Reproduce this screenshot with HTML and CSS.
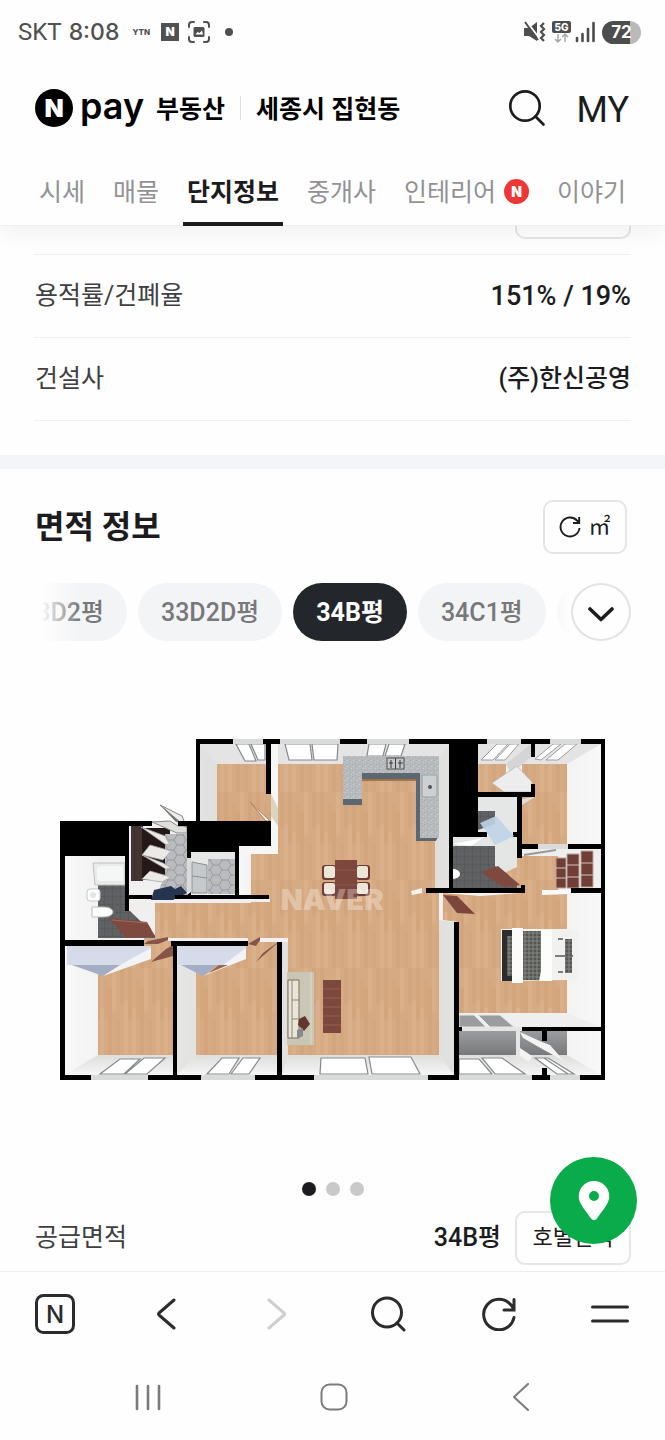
FILE: index.html
```html
<!DOCTYPE html>
<html lang="ko">
<head>
<meta charset="utf-8">
<meta name="viewport" content="width=device-width, initial-scale=1">
<title>Npay 부동산</title>
<link rel="stylesheet" href="styles.css">
</head>
<body>
<div class="app">
  <header class="top">
    <div class="status">
      <span class="carrier">SKT</span>
      <span class="clock">8:08</span>
      <span class="ytn">YTN</span>
      <span class="status-n">N</span>
      <svg class="shot" width="22" height="22" viewBox="0 0 22 22" fill="none" stroke="#505050" stroke-width="2" stroke-linecap="round">
        <path d="M1 6V4a3 3 0 0 1 3-3h2M16 1h2a3 3 0 0 1 3 3v2M21 16v2a3 3 0 0 1-3 3h-2M6 21H4a3 3 0 0 1-3-3v-2"/>
        <rect x="5.500" y="6" width="11" height="10" rx="1.500" fill="#505050" stroke="none"/>
        <path d="M7.500 13.500l2-2.500 2 1 2.500-2.500 1 4z" fill="#fff" stroke="none"/>
      </svg>
      <span class="status-dot"></span>
      <span class="status-gap"></span>
      <svg width="23" height="22" viewBox="0 0 23 22" fill="none" stroke="#4d4d4d">
        <path d="M1 7h5l8-6v19l-8-5H1z" fill="#4d4d4d" stroke="none"/>
        <path d="M3 0l14 18" stroke="#fefefe" stroke-width="2"/>
        <path d="M2 1l13 18" stroke-width="2"/>
        <path d="M21 2l-3 3 3 3-3 3 3 3-3 3 3 3" stroke-width="2.200"/>
      </svg>
      <svg class="net" width="19" height="23" viewBox="0 0 19 23">
        <rect width="19" height="12" rx="2" fill="#4d4d4d"/>
        <text x="9.500" y="10" text-anchor="middle" class="net-text">5G</text>
        <path d="M6 13v8M3 18l3 3 3-3M13 21v-8M10 16l3-3 3 3" fill="none" stroke="#a8a8a8" stroke-width="1.500"/>
      </svg>
      <svg width="21" height="22" viewBox="0 0 21 22" stroke="#4d4d4d" stroke-width="2.600" stroke-linecap="round"><path d="M2 17v3M7.500 13v7M13 8v12M18.500 2v18"/></svg>
      <span class="battery">72</span>
    </div>

    <div class="brand">
      <a class="logo" href="#">
        <svg width="38" height="38" viewBox="0 0 38 38"><circle cx="19" cy="19" r="19"/><text x="19" y="28" text-anchor="middle" class="logo-n">N</text></svg>
        <span class="pay">pay</span>
        <span class="service">부동산</span>
      </a>
      <span class="brand-line"></span>
      <h1 class="region">세종시 집현동</h1>
      <button class="plain search" type="button" aria-label="검색">
        <svg width="38" height="38" viewBox="0 0 38 38" fill="none" stroke="#1c1c1e" stroke-width="2.700" stroke-linecap="round"><circle cx="17" cy="17" r="14.700"/><path d="M27.500 27.500l8 8"/></svg>
      </button>
      <a class="my" href="#">MY</a>
    </div>

    <nav class="tabs">
      <a class="tab" href="#">시세</a>
      <a class="tab" href="#">매물</a>
      <a class="tab tab-on" href="#" aria-current="page">단지정보</a>
      <a class="tab" href="#">중개사</a>
      <a class="tab" href="#">인테리어<span class="new">N</span></a>
      <a class="tab" href="#">이야기</a>
    </nav>
  </header>

  <main class="content">
    <section class="facts">
      <div class="scrolled"><button class="outline wide" type="button" aria-label="자세히"></button></div>
      <dl class="list">
        <div class="row"><dt>용적률/건폐율</dt><dd class="num">151% / 19%</dd></div>
        <div class="row"><dt>건설사</dt><dd>(주)한신공영</dd></div>
      </dl>
    </section>

    <section class="area">
      <div class="area-head">
        <h2>면적 정보</h2>
        <button class="outline unit" type="button">
          <svg width="22" height="22" viewBox="0 0 22 22" fill="none" stroke="#1c1c1e" stroke-width="1.900"><path d="M20.500 12A9.500 9.500 0 1 1 18 4.500L20 6.500M20.200 1v6H14"/></svg>
          <span>㎡</span>
        </button>
      </div>

      <div class="types">
        <div class="strip">
          <div class="pills">
            <button class="pill" type="button">33D2평</button>
            <button class="pill" type="button">33D2D평</button>
            <button class="pill pill-on" type="button">34B평</button>
            <button class="pill" type="button">34C1평</button>
            <span class="pill pill-next"></span>
          </div>
        </div>
        <button class="more" type="button" aria-label="펼치기">
          <svg width="26" height="16" viewBox="0 0 26 16" fill="none" stroke="#1c1c1e" stroke-width="3.600" stroke-linecap="round" stroke-linejoin="round"><path d="M2 3l11 10.500L24 3"/></svg>
        </button>
      </div>

      <svg class="plan" viewBox="35 641 596 541" role="img" aria-label="34B평 평면도">
        <defs>
          <pattern id="wood" width="32" height="88" patternUnits="userSpaceOnUse">
            <rect width="32" height="88" fill="#d6aa82"/>
            <path d="M0 0h4v52H0zM12 20h4v68h-4zM24 0h4v36h-4z" fill="#d2a57c"/>
            <path d="M4 40h4v48H4zM16 0h4v44h-4zM28 32h4v56h-4z" fill="#dab08a"/>
            <path d="M8 12h4v40H8zM20 52h4v36h-4z" fill="#d4a77e"/>
          </pattern>
          <pattern id="hex" width="18" height="10" patternUnits="userSpaceOnUse">
            <rect width="18" height="10" fill="#b9bbbe"/>
            <path d="M0 5h3l3-5h6l3 5h3M3 5l3 5h6l3-5" fill="none" stroke="#909296" stroke-width=".8"/>
          </pattern>
          <pattern id="tile" width="8" height="8" patternUnits="userSpaceOnUse">
            <rect width="8" height="8" fill="#5f6162"/><path d="M0 0h8M0 0v8" stroke="#4f5152" stroke-width="1"/>
          </pattern>
          <pattern id="stone" width="6" height="6" patternUnits="userSpaceOnUse">
            <rect width="6" height="6" fill="#b8bbbe"/><path d="M1 1h1v1H1zM4 2h1v1H4zM2 4h1v1H2z" fill="#a6aaae"/><path d="M3 0h1v1H3zM5 4h1v1H5z" fill="#cbced1"/>
          </pattern>
          <pattern id="plaid" width="4" height="4" patternUnits="userSpaceOnUse">
            <rect width="4" height="4" fill="#555653"/><path d="M0 1h4M1 0v4" stroke="#8f908c" stroke-width=".8"/>
          </pattern>
          <linearGradient id="side"><stop offset="0" stop-color="#f7f8f7"/><stop offset="1" stop-color="#dfe0de"/></linearGradient>
          <linearGradient id="sideR"><stop offset="0" stop-color="#dfe0de"/><stop offset="1" stop-color="#f7f8f7"/></linearGradient>
          <linearGradient id="down" x2="0" y2="1"><stop offset="0" stop-color="#dedfdd"/><stop offset="1" stop-color="#f4f5f4"/></linearGradient>
          <linearGradient id="grey" x2="0" y2="1"><stop offset="0" stop-color="#9b9c9e"/><stop offset="1" stop-color="#77797b"/></linearGradient>
        </defs>

        <!-- base walls and floors -->
        <path d="M200 744h401v331H65V856h64v-35h71z" fill="#eff0ef"/>
        <g fill="url(#wood)">
          <path d="M217 764h54v57h-54z"/>
          <path d="M278 764h157v128h8v28h-4v135H288V938H155v-35h96v-49h27z"/>
          <path d="M443 893h124v120H459v-91l-16-2z"/>
          <path d="M98 946h75v109H98zM196 946h81v109h-81zM144 938h27v10h-27zM248 938h29v12h-29z"/>
          <path d="M478 764h28v28h-28zM522 764h45v80h-45zM498 866l24-10h36v37h-50z"/>
        </g>
        <path d="M200 744h17v77h-17zM65 856h33v84H65zM65 946h33v109l-33 20zM177 946h19v109l-19 20z" fill="url(#side)"/>
        <path d="M282 941h6v114l-6 20zM239 850h12v45h-12z" fill="url(#side)"/>
        <path d="M439 920l15 2v153l-15-20zM567 764l34-20v100h-34zM567 893h34v134l-34-14zM567 1031h34v44l-34-20zM435 764l14-20v145h-14z" fill="url(#sideR)"/>
        <path d="M65 1075l33-20h75v20zM177 1075l19-20h81v20zM282 1075l6-20h151l15 20zM459 1055h108l34 20H459z" fill="url(#down)"/>
        <path d="M278 764l-7-20h178l-14 20zM200 744h66v20h-49zM478 744h53v20h-53zM535 744h66l-34 20h-45z" fill="#e3e4e3"/>
        <path d="M459 1013h108l34 14H459z" fill="#eeefee"/>
        <path d="M271 744h7v110h-39v-8h32z" fill="#f6f6f5"/>
        <path d="M271 794l7 14v18l-7-10z" fill="#ddd3c2"/>
        <path d="M250 802l20 19h-4z" fill="#f7f4ef" stroke="#a98562" stroke-width="1"/>

        <!-- window panes -->
        <g fill="#fff" stroke="#85898c" stroke-width="1.200">
          <path d="M236 744h13l7 17h-11zM251 744h14v16h-7zM285 744h25l2 16h-23zM312 744h26l-1 16h-23zM369 744h17l-3 12h-16zM389 744h16l-4 12h-16z"/>
          <path d="M100 1074l20-15h20l-16 15zM125 1074l19-16h21l-18 16zM207 1074l15-16h17l-10 16zM231 1074l12-16h17l-11 16z"/>
          <path d="M321 1058h44l3 16h-48zM369 1057h42l9 17h-48zM459 1059h20l13 15h-33zM482 1058h20l23 16h-30z"/>
          <path d="M535 1058h9l24 16h-11zM548 1058l26 16h-6l-24-16z"/>
        </g>
        <g fill="#fff" stroke="#9a9d9f" stroke-width="1">
          <path d="M481 760l16-16h11l-15 16zM495 760l15-16h9l-14 16zM535 759l18-15h8l-20 16zM546 760l19-16h12l-19 16z"/>
        </g>

        <!-- bathroom -->
        <path d="M98 885h27v26h5l25 24v3H98z" fill="url(#tile)"/>
        <path d="M93 863h32v22H95z" fill="#e9ebeb" stroke="#bfc2c2"/>
        <rect x="97" y="866" width="26" height="15" rx="3" fill="#f5f6f6"/>
        <rect x="87" y="889" width="13" height="12" rx="3" fill="#fff" stroke="#c4c8c8"/>
        <circle cx="93" cy="895" r="3" fill="#e1e5e5"/>
        <path d="M92 907h12a9 5 0 0 1 0 10H92z" fill="#fff" stroke="#b9bcbc"/>
        <path d="M129 899h22v36h4v-33h115v-3zM129 900h25v11h-25z" fill="#f0efed"/>
        <path d="M109 918l38 4 8 14-29 2z" fill="#7f493f"/><path d="M112 920l35 3" stroke="#a4685c"/>

        <!-- entry -->
        <path d="M131 826h12v55h-12z" fill="#443431"/>
        <path d="M142 828h28v52h-28z" fill="#241918"/>
        <path d="M165 834h22v61h-30l8-20z" fill="url(#hex)"/>
        <path d="M141 827l24 9 5 9-5-1zM142 855l8-10 21 6-8 9zM142 855l21 8 8 5-5 1zM142 879l8-8 21 6-9 5z" fill="#eceae7" stroke="#aaa6a2" stroke-width=".8"/>
        <path d="M152 822l25 11h10v-7h-9l-8-5z" fill="#dfdfdc" stroke="#8d8d8b"/>
        <path d="M160 805l22 11 5 12z" fill="#eee" stroke="#83847f" stroke-width="1"/><path d="M160 805l27 23-12-7z" fill="#77746e"/>
        <path d="M154 890l17-4 4 3 6-3 6 7-14 7h-22z" fill="#26344f"/>

        <!-- utility room -->
        <path d="M191 852h44v42h-44z" fill="#e6e7e7"/>
        <path d="M208 859h27v35h-27z" fill="url(#hex)"/>
        <path d="M192 862l15 3v28h-15zM192 876l15 2" fill="#c6c9cc" stroke="#8e9296"/>

        <!-- wardrobes and doors, bedrooms -->
        <path d="M67 946h84v7l-31 12H67zM178 946h68v7l-16 12h-52z" fill="#d6dbe9"/>
        <path d="M72 965h48l-17 11zM181 965h36l-14 11z" fill="#a3adc4"/>
        <path d="M151 948v11l-48 17 17-11zM246 948v11l-43 17 20-11z" fill="#f2f3f5"/>
        <path d="M209 973l10-8h9z" fill="#946653"/>
        <path d="M144 944l4-3 20-4v3l-10 4zM151 962l15-13 7-4v11zM248 944l12-7v3l-4 6zM256 962l7-9 18-13z" fill="#87544a"/>
        <path d="M129 938h15v3h-15zM168 938h80v3h-80zM260 938h28v4h-28z" fill="#f3f2f0"/>

        <!-- kitchen -->
        <path d="M343 799h19v6h-19zM362 773h57v7h-57zM416 773h4v64h18l-2 4h-20z" fill="#5b686f"/>
        <path d="M343 756h96v82h-19v-65h-58v26h-19z" fill="url(#stone)"/>
        <path d="M362 780h54" stroke="#9d7350" stroke-width="2"/>
        <rect x="387" y="758" width="17" height="11" fill="#c6c8c7" stroke="#4f5252"/>
        <path d="M395.500 758v11M389 763h4M391 760v8M398 763h5M400 760v8" stroke="#383b3b" stroke-width="1"/>
        <rect x="422" y="775" width="15" height="22" rx="2" fill="#ccd0d2" stroke="#9ba0a3"/><circle cx="430" cy="787" r="2" fill="#555"/>

        <!-- dining and living -->
        <g fill="#6c3c33"><rect x="322" y="865" width="14" height="15" rx="3"/><rect x="322" y="882" width="14" height="14" rx="3"/><rect x="356" y="865" width="14" height="15" rx="3"/><rect x="356" y="882" width="14" height="14" rx="3"/></g>
        <g fill="#ece6d8"><rect x="324" y="866" width="11" height="12" rx="2"/><rect x="324" y="883" width="11" height="11" rx="2"/><rect x="357" y="866" width="11" height="12" rx="2"/><rect x="357" y="883" width="11" height="11" rx="2"/></g>
        <path d="M335 860h22v39h-22z" fill="#7e473d"/><path d="M335 870h22M335 885h22" stroke="#8d574a"/>
        <text x="332" y="910" text-anchor="middle" class="mark">NAVER</text>
        <path d="M287 972h27v73h-27z" fill="#c9c6b5"/><path d="M311 972v73" stroke="#dcdacd"/>
        <path d="M288 980h11v58h-11z" fill="#eae5d9" stroke="#75705f" stroke-width="1"/><path d="M292 980v58M292 1000h7M292 1019h7" stroke="#8c8777"/>
        <path d="M299 1019l6-3 5 8-6 7-6-6z" fill="#60362f"/><path d="M297 1030l6-2v8l-6 3z" fill="#858b8d"/>
        <path d="M323 980h18v53h-18z" fill="#7c473d"/><path d="M323 989h18M323 998h18M323 1007h18M323 1016h18M323 1025h18" stroke="#96604f"/>
        <path d="M411 891l11-3v5l-10 2zM439 893h4v27h-4zM443 893h78l-40 3z" fill="#f4f3f1"/>
        <path d="M443 895l14 1 18 18-18-1z" fill="#7d463d"/>

        <!-- upper right rooms -->
        <path d="M506 764l25-20v13l-20 17z" fill="#d4d5d4"/>
        <path d="M517 766l15 16v10h-28l-12-9z" fill="#ecedec" stroke="#b8b9b7" stroke-width=".8"/>
        <path d="M478 797h39v40h-39z" fill="#e5e6e6"/><path d="M478 811h17v13l-17 6z" fill="url(#tile)"/>
        <path d="M522 799l13-2-13 8z" fill="#ddd"/>
        <path d="M453 837h64v30l-22 10h-42z" fill="#e4e5e5"/><path d="M453 846h42v20l22 18v4h-64z" fill="url(#tile)"/>
        <path d="M453 844l30-6-12 8z" fill="#fff"/>
        <path d="M453 869a7 5 0 0 1 0 10z" fill="#fff"/>
        <path d="M481 872l17-6 22 19-17 2z" fill="#7f493f"/>
        <path d="M522 849h79v7h-79z" fill="#eee"/><path d="M524 855l32-5" stroke="#999" stroke-width="2"/>
        <path d="M556 858h10v30h-10zM567 854h12v34h-12zM581 851h12v36h-12z" fill="#703e35" stroke="#b9a59e" stroke-width="1"/>
        <path d="M556 868h10M556 878h10M567 865h12M567 877h12M581 863h12M581 875h12" stroke="#d2c5bf" stroke-width="1"/>
        <path d="M542 890h29v4l-29 1z" fill="#fafafa"/>

        <!-- bed -->
        <path d="M501 929h66l11 3v48h-11l-66 1z" fill="#f1f1ef"/>
        <path d="M502 930h10v51h-10z" fill="#2c2d2c"/><path d="M507 936h5v40h-5z" fill="url(#plaid)"/>
        <path d="M512 928h11v55h-11z" fill="#fbfbfa"/><path d="M523 931h18v49h-18z" fill="url(#plaid)"/>
        <path d="M541 930h11v51h-13l2-10z" fill="#fdfdfc"/><path d="M558 939h5M555 956h18M558 972h5" stroke="#555" stroke-width="1.500"/>
        <path d="M565 939h7v34h-7z" fill="url(#plaid)"/>

        <!-- balcony -->
        <path d="M459 1015h15l12 12h-27zM478 1015h22l14 12h-24z" fill="#9b9c9e" stroke="#e8e9e8"/>
        <path d="M459 1031h57v24h-57zM520 1031h47v24h-47z" fill="url(#grey)"/>
        <path d="M462 1027h60v4h-2v29h-4v-29h-54z" fill="#e4e5e4"/>
        <path d="M520 1032l22 10 8 3 14 16-20-11-21-12zM520 1048l12 8-3 6-9-6z" fill="#f2f3f2"/>

        <!-- glass breaks in the outer wall -->
        <path d="M196 739h409v5H196zM60 1075h545v5H60zM538 844h30v5h-30zM187 858h4v34h-4z" fill="#d9dada"/>
        <!-- structural walls -->
        <g fill="#000">
          <path d="M196 739h37v5h-33v77h-4zM263 739h17v5h-9v50h-5v-50h-3zM340 739h27v5h-27z"/>
          <path d="M409 739h78v5h-9v93h-25v51h68v-3h4v8h-99v-5h23V744h-40z"/>
          <path d="M521 739h29v5h-15v13h-4v-13h-10zM535 784v13h-13v47h16v5h-16v9h-5v-21h-4v-5h4v-35h-39v-5h53v-8zM478 832h9v5h-9z"/>
          <path d="M581 739h24v341h-25v-5h21v-44h-54v10h-5v-10h-20v-4h79V893h-30v-5h30v-39h-33v-5h33V744h-20z"/>
          <path d="M60 821h92v5h-23v69h23v4h-23v12h-4v-55H65v84h79v6H65v129h26v5H60z"/>
          <path d="M178 821h93v25h-32v49h30v4h-94v-4h12l4-3v3h44v-43h-44v6h-4v-32h-9z"/>
          <path d="M171 941h77v5h-71v129h24v5h-53v-5h25V946h-2zM277 942h5v133h32v5h-59v-5h22zM454 922h5v105h3v4h-3v49h-31v-5h26zM542 1068h5v7h3v5h-18v-5h10z"/>
        </g>
        <path d="M480 823l16-7 18 20-19 9-8-12z" fill="#bfd4e8" opacity=".9"/>
      </svg>

      <div class="dots"><span class="dot dot-on"></span><span class="dot"></span><span class="dot"></span></div>

      <div class="supply">
        <span class="supply-name">공급면적</span>
        <span class="supply-value">34B평</span>
        <button class="outline wide" type="button">호별면적</button>
        <button class="pin" type="button" aria-label="지도">
          <svg width="32" height="40" viewBox="0 0 32 40"><path fill="#fff" fill-rule="evenodd" d="M16 0a15.300 15.300 0 0 0-15.300 15.300c0 6.500 5 12 12.300 22.200q3 3.500 6 0C26.300 27.300 31.300 21.800 31.300 15.300A15.300 15.300 0 0 0 16 0zm0 10a5 5 0 1 1 0 10 5 5 0 0 1 0-10z"/></svg>
        </button>
      </div>
    </section>
  </main>

  <footer class="bottom">
    <nav class="browser">
      <button class="plain" type="button" aria-label="홈"><svg width="40" height="40" viewBox="0 0 40 40"><rect x="1.500" y="1.500" width="37" height="37" rx="7" fill="none" stroke="#2b2b2d" stroke-width="3"/><text x="20" y="29" text-anchor="middle" class="home-n">N</text></svg></button>
      <button class="plain" type="button" aria-label="뒤로"><svg width="20" height="32" viewBox="0 0 20 32" fill="none" stroke="#2b2b2d" stroke-width="3" stroke-linecap="round" stroke-linejoin="round"><path d="M18 2L3 15q-1 1 0 2l15 13"/></svg></button>
      <button class="plain" type="button" aria-label="앞으로" disabled><svg width="20" height="32" viewBox="0 0 20 32" fill="none" stroke="#cfcfcf" stroke-width="3" stroke-linecap="round" stroke-linejoin="round"><path d="M2 2l15 13q1 1 0 2L2 30"/></svg></button>
      <button class="plain" type="button" aria-label="검색"><svg width="36" height="36" viewBox="0 0 36 36" fill="none" stroke="#2b2b2d" stroke-width="3" stroke-linecap="round"><circle cx="17" cy="16.500" r="14.500"/><path d="M27 27l7 7"/></svg></button>
      <button class="plain" type="button" aria-label="새로고침"><svg width="34" height="34" viewBox="0 0 34 34" fill="none" stroke="#2b2b2d" stroke-width="3" stroke-linecap="round"><path d="M32 20.500A15.300 15.300 0 1 1 29 8l2.500 3.500M32 2.500v10.500H22"/></svg></button>
      <button class="plain" type="button" aria-label="메뉴"><svg width="38" height="18" viewBox="0 0 38 18" stroke="#2b2b2d" stroke-width="3" stroke-linecap="round"><path d="M1.500 2h35M1.500 16h35"/></svg></button>
    </nav>
    <nav class="system">
      <button class="plain" type="button" aria-label="최근 앱"><svg width="26" height="27" viewBox="0 0 26 27" stroke="#7b7b7b" stroke-width="2.600" stroke-linecap="round"><path d="M2 2v23M13 2v23M24 2v23"/></svg></button>
      <button class="plain" type="button" aria-label="홈 화면"><svg width="28" height="28" viewBox="0 0 28 28"><rect x="1.500" y="1.500" width="25" height="25" rx="8" fill="none" stroke="#7b7b7b" stroke-width="2"/></svg></button>
      <button class="plain" type="button" aria-label="이전"><svg width="18" height="28" viewBox="0 0 18 28" fill="none" stroke="#7b7b7b" stroke-width="2" stroke-linecap="round" stroke-linejoin="round"><path d="M16 1L2 14l14 13"/></svg></button>
    </nav>
  </footer>
</div>
</body>
</html>
```
FILE: styles.css
```css
* { box-sizing: border-box; }
body {
  margin: 0;
  background: #fefefe;
  color: #1c1c1e;
  font-family: Roboto, "Noto Sans CJK KR", sans-serif;
  font-size: 25px;
  line-height: 32px;
}
a { color: inherit; text-decoration: none; }
button { font: inherit; color: inherit; padding: 0; cursor: pointer; }
h1, h2, dl, dd { margin: 0; }
svg { display: block; }

.app { min-height: 100vh; display: flex; flex-direction: column; }

/* header */
.top {
  position: relative;
  z-index: 1;
  background: #fefefe;
  border-bottom: 1px solid #efefef;
  box-shadow: 0 8px 20px rgba(0, 0, 0, 0.05);
}
.status { display: flex; align-items: center; height: 64px; padding: 0 24px 0 18px; color: #505050; }
.carrier { font-size: 24px; }
.clock { margin-left: 7px; font-family: Inter, sans-serif; font-size: 23px; font-weight: 500; }
.ytn { margin-left: 13px; font-family: Inter, sans-serif; font-size: 8px; font-weight: 800; }
.status-n {
  width: 18px; height: 18px; margin-left: 11px;
  background: #505050; color: #fff;
  font-family: Inter, sans-serif; font-size: 12px; font-weight: 900; line-height: 18px; text-align: center;
}
.shot { margin-left: 9px; }
.status-dot { width: 8px; height: 8px; margin-left: 15px; border-radius: 50%; background: #505050; }
.status-gap { flex: 1; }
.net { margin: 0 4px 0 6px; }
.net-text { font: 800 10px Inter, sans-serif; fill: #fff; }
.battery {
  width: 39px; height: 23px; margin-left: 6px; border-radius: 12px;
  background: linear-gradient(90deg, #4d4d4d 72%, #b9b9b9 72%);
  color: #fff; font-family: Inter, sans-serif; font-size: 17px; font-weight: 700; line-height: 23px; text-align: center;
}

.brand { display: flex; align-items: center; height: 88px; padding: 0 36px 0 35px; color: #000; }
.logo { display: flex; align-items: center; }
.logo-n { font: 900 25px Inter, sans-serif; fill: #fff; }
.pay { margin: 0 12px 4px 7px; font-family: Inter, sans-serif; font-size: 36px; font-weight: 600; line-height: 40px; }
.service, .region { padding-top: 3px; font-size: 25px; font-weight: 700; line-height: 32px; }
.brand-line { width: 1px; height: 24px; margin: 0 15px; background: #dedede; }
.plain { display: flex; align-items: center; justify-content: center; border: 0; background: none; }
.search { margin-left: auto; }
.my { margin-left: 30px; padding-top: 4px; font-size: 36px; line-height: 40px; color: #1c1c1e; }

.tabs { display: flex; gap: 20px; height: 73px; padding: 0 35px; color: #929294; white-space: nowrap; }
.tab { display: flex; align-items: center; height: 74px; padding: 12px 4px 0; border-bottom: 4px solid transparent; }
.tab-on { color: #1c1c1e; font-weight: 700; border-color: #1c1c1e; }
.new {
  width: 25px; height: 25px; margin: 0 0 4px 8px; border-radius: 50%;
  background: #ee3734; color: #fff;
  font-family: Inter, sans-serif; font-size: 14px; font-weight: 900; line-height: 25px; text-align: center;
}

/* content */
.content { flex: 1; }
.facts { padding: 0 34px 34px; border-bottom: 14px solid #f4f5f7; }
.scrolled { display: flex; justify-content: flex-end; align-items: flex-end; height: 28px; padding-bottom: 15px; overflow: hidden; }
.outline { flex: none; height: 54px; border: 2px solid #e4e5e7; border-radius: 10px; background: #fefefe; }
.wide { width: 116px; font-size: 22px; }
.list { border-top: 1px solid #efeff0; }
.row { display: flex; justify-content: space-between; align-items: center; height: 83px; border-bottom: 1px solid #efeff0; }
.row dt { padding-left: 1px; color: #404042; }
.row dd { font-weight: 500; }
.row .num { font-size: 27px; }

.area { padding: 31px 34px 6px 35px; }
.area-head { display: flex; justify-content: space-between; align-items: center; }
.area-head h2 { font-size: 32px; line-height: 40px; }
.unit { display: flex; align-items: center; justify-content: center; gap: 7px; width: 84px; margin-right: 4px; font-size: 22px; }

.types { display: flex; margin-top: 29px; }
.strip { position: relative; flex: 1; min-width: 0; overflow: hidden; }
.strip::before, .strip::after { content: ""; position: absolute; top: 0; bottom: 0; z-index: 1; pointer-events: none; }
.strip::before { left: 0; width: 44px; background: linear-gradient(90deg, #fefefe 14%, rgba(254, 254, 254, 0)); }
.strip::after { right: 0; width: 22px; background: linear-gradient(270deg, #fefefe, rgba(254, 254, 254, 0)); }
.pills { display: flex; gap: 11px; margin-left: -36px; }
.pill { flex: none; height: 58px; padding: 2px 23px 0; border: 0; border-radius: 29px; background: #f3f4f6; color: #77787a; font-weight: 500; }
.pill-on { background: #23262b; color: #fff; font-weight: 700; }
.pill-next { width: 128px; }
.more { display: flex; flex: none; align-items: center; justify-content: center; width: 60px; height: 58px; padding-top: 4px; border: 2px solid #e2e3e4; border-radius: 50%; background: #fefefe; }

.plan { width: 100%; height: auto; }
.mark { font: 900 29px Inter, sans-serif; fill: #fff; fill-opacity: 0.32; }
.dots { display: flex; justify-content: center; gap: 10px; }
.dot { width: 14px; height: 14px; border-radius: 50%; background: #c9c9ca; }
.dot-on { background: #1c1c20; }

.supply { position: relative; display: flex; align-items: center; margin-top: 15px; }
.supply-name { flex: 1; color: #404042; }
.supply-value { margin-right: 14px; font-weight: 500; }
.pin {
  position: absolute; right: -6px; bottom: 21px;
  display: flex; align-items: center; justify-content: center;
  width: 87px; height: 87px; border: 0; border-radius: 50%; background: #0aab4b;
}

/* bottom bars */
.bottom { border-top: 1px solid #ececec; }
.browser { display: grid; grid-template-columns: repeat(6, 1fr); height: 84px; }
.home-n { font: 500 24px Inter, sans-serif; fill: #2b2b2d; }
.system { display: grid; grid-template-columns: repeat(3, 1fr); height: 84px; padding: 0 51px 2px 55px; }
```
